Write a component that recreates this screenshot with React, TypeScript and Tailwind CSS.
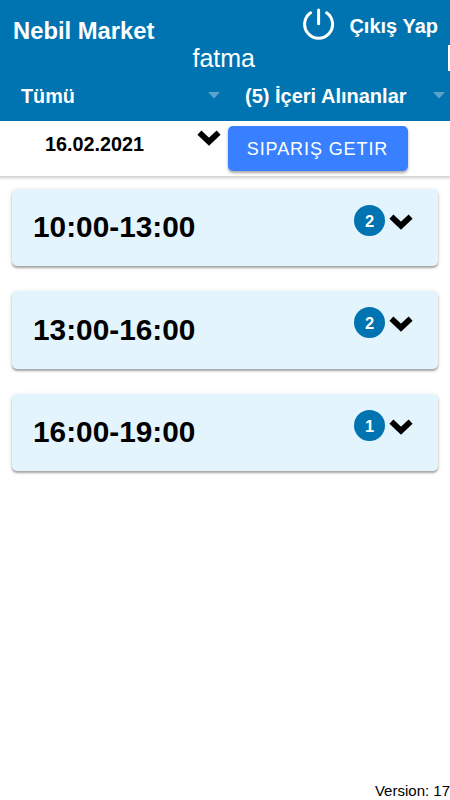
interface Slot {
  label: string;
  count: number;
}

const slots: Slot[] = [
  { label: "10:00-13:00", count: 2 },
  { label: "13:00-16:00", count: 2 },
  { label: "16:00-19:00", count: 1 },
];

const Chevron = ({ className = "" }: { className?: string }) => (
  <svg width="24" height="16" viewBox="0 0 24 16" className={`shrink-0 ${className}`}>
    <path d="M2.4 2.7 12 11.7 21.6 2.7" fill="none" stroke="#000" strokeWidth="5.8" />
  </svg>
);

const Caret = () => (
  <svg width="12" height="7" viewBox="0 0 12 7" className="shrink-0">
    <path d="M0 0h12L6 6.5z" fill="#5ba3cd" />
  </svg>
);

const PowerIcon = () => (
  <svg
    width="32"
    height="32"
    viewBox="0 0 32 32"
    fill="none"
    stroke="#fff"
    strokeWidth="3"
    strokeLinecap="round"
    className="shrink-0"
  >
    <path d="M15.6 2v13.7" />
    <path d="M23.6 4.8a14 14 0 1 1-16 0" />
  </svg>
);

const Header = () => (
  <header className="relative h-[121px] bg-[#0073b1] text-white">
    <div className="flex h-[45px] items-start justify-between pl-[13px] pr-3">
      <h1 className="pt-[17px] text-[23.8px] leading-[28px] font-bold">Nebil Market</h1>
      <button className="flex items-start pt-2">
        <PowerIcon />
        <span className="ml-[14px] pt-[6px] text-[20px] leading-6 font-bold">Çıkış Yap</span>
      </button>
    </div>
    <div className="flex h-[27px] items-start justify-between pl-[192.5px]">
      <span className="text-[25px] leading-[27px]">fatma</span>
      <span className="h-[26px] w-[2px] bg-white" />
    </div>
    <div className="flex h-[47px] items-center pr-[5px] text-[20px] font-bold">
      <div className="flex w-[220px] items-center justify-between pl-[21px]">
        <span className="text-[19.8px] leading-[30px]">Tümü</span>
        <Caret />
      </div>
      <div className="flex flex-1 items-center justify-between pl-[25px]">
        <span>(5) İçeri Alınanlar</span>
        <Caret />
      </div>
    </div>
  </header>
);

const Filters = () => (
  <div className="flex h-[55px] items-start shadow-[0_1px_3px_1px_rgba(0,0,0,0.2)]">
    <span className="w-[152px] pt-[11px] pl-[45px] text-[19.8px] leading-6 font-bold">16.02.2021</span>
    <Chevron className="mt-[9px] ml-[45px]" />
    <button className="mt-[5px] ml-[6.5px] h-[45px] w-[180px] rounded-[5px] bg-[#3880ff] pt-px text-[18px] tracking-[0.9px] text-white shadow-[0_2px_3px_rgba(0,0,0,0.35)]">
      SIPARIŞ GETIR
    </button>
  </div>
);

const SlotCard = ({ label, count }: Slot) => (
  <div className="flex h-[77.5px] items-start justify-between rounded-[5px] bg-[#e3f4fd] pr-[25px] pl-[21px] shadow-[0_2px_2px_rgba(0,0,0,0.3),0_1px_5px_rgba(0,0,0,0.12)]">
    <h2 className="pt-[21.5px] text-[29.8px] leading-[34px] font-bold">{label}</h2>
    <div className="flex items-start pt-4">
      <span className="flex size-[31px] items-center justify-center rounded-full bg-[#0073b1] pt-[2px] text-[16.5px] font-bold text-white">
        {count}
      </span>
      <Chevron className="mt-[9px] ml-1" />
    </div>
  </div>
);

export default function App() {
  return (
    <div className="flex h-screen flex-col overflow-hidden bg-white font-['Liberation_Sans',Arial,sans-serif] text-black">
      <Header />
      <Filters />
      <main className="flex flex-1 flex-col gap-[25px] px-3 pt-[12.8px]">
        {slots.map((slot) => (
          <SlotCard key={slot.label} {...slot} />
        ))}
      </main>
      <footer className="text-right text-[15px] leading-[18px]">Version: 17</footer>
    </div>
  );
}
